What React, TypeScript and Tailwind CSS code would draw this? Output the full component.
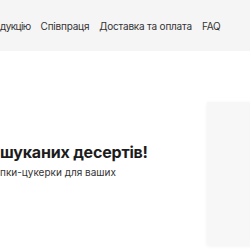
export default function App() {
  return (
    <div className="w-[250px] h-[250px] overflow-hidden bg-white relative" style={{ fontFamily: 'Inter, "Noto Sans", sans-serif' }}>
      <header className="h-[51px] bg-[#f5f5f5] flex items-center">
        <nav className="flex items-center gap-[10px] text-[10px] tracking-[-0.2px] text-[#333] pt-[1px] whitespace-nowrap">
          <span className="tracking-[-0.6px]">дукцію</span>
          <span>Співпраця</span>
          <span>Доставка та оплата</span>
          <span>FAQ</span>
        </nav>
      </header>
      <div className="flex">
        <div className="pt-[89px] w-[207px] shrink-0 whitespace-nowrap">
          <h1 className="text-[16px] font-bold tracking-[-0.2px] text-[#1c1c1c] leading-[24px]">шуканих десертів!</h1>
          <p className="text-[10px] text-[#333] leading-[14px] mt-[1px]">пки-цукерки для ваших</p>
        </div>
        <div className="mt-[51px] w-[60px] h-[143px] shrink-0 bg-[#f7f7f7] shadow-[0_1px_4px_rgba(0,0,0,0.06)]" />
      </div>
    </div>
  );
}
